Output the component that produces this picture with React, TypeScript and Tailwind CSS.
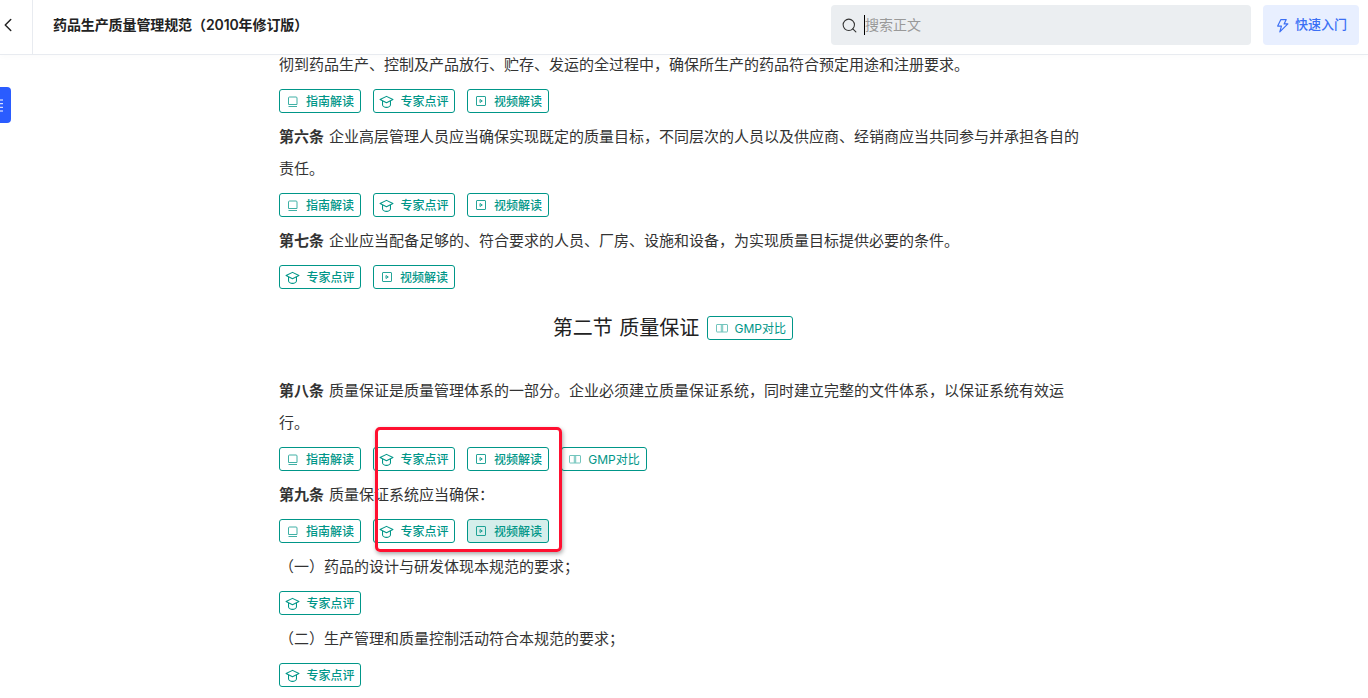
import { ChevronLeft, Search } from "lucide-react";
import type { ReactNode } from "react";

type TagKind = "guide" | "expert" | "video" | "gmp";

function BookIcon() {
  return (
    <svg width="14" height="14" viewBox="0 0 14 14" fill="none" stroke="currentColor" strokeWidth="1" className="opacity-75">
      <path d="M2.500 10.500V4a1 1 0 0 1 1-1h6.500a1 1 0 0 1 1 1v6.500z" />
      <path d="M2.500 12.500h8.500" />
    </svg>
  );
}

function CapIcon() {
  return (
    <svg width="15" height="15" viewBox="0 0 14 14" fill="none" stroke="currentColor" strokeWidth="1" strokeLinejoin="round">
      <path d="M7 2.200 13 5.200 7 8.200 1 5.200z" />
      <path d="M3.300 6.600V10c0 1.400 2 2.500 3.700 2.500s3.700-1.100 3.700-2.500V6.600" />
    </svg>
  );
}

function VideoIcon() {
  return (
    <svg width="14" height="14" viewBox="0 0 14 14" fill="none" stroke="currentColor" strokeWidth="1" className="opacity-85">
      <rect x="2.500" y="2.500" width="9" height="9" rx="0.500" />
      <path d="M6 5.500v3L8.300 7z" />
    </svg>
  );
}

function CompareIcon() {
  return (
    <svg width="14" height="14" viewBox="0 0 14 14" fill="none" stroke="currentColor" strokeWidth="1" className="opacity-55">
      <rect x="1.500" y="3.500" width="11" height="7.500" rx="0.500" />
      <path d="M6.300 3.500V11M7.700 3.500V11" />
    </svg>
  );
}

const TAGS: Record<TagKind, { label: string; icon: ReactNode; width: string }> = {
  guide: { label: "指南解读", icon: <BookIcon />, width: "w-[82px]" },
  expert: { label: "专家点评", icon: <CapIcon />, width: "w-[82px]" },
  video: { label: "视频解读", icon: <VideoIcon />, width: "w-[82px]" },
  gmp: { label: "GMP对比", icon: <CompareIcon />, width: "w-[86px]" },
};

function Tag({ kind, active }: { kind: TagKind; active?: boolean }) {
  const tag = TAGS[kind];
  return (
    <span
      className={`flex h-6 items-center justify-center gap-[6px] rounded-[3px] border border-[#009688] text-xs font-medium text-[#009688] ${tag.width} ${
        active ? "bg-[#d5eeeb]" : "bg-white"
      }`}
    >
      {tag.icon}
      <span className={kind === "gmp" ? "pt-px font-normal" : "pt-px"}>{tag.label}</span>
    </span>
  );
}

function TagRow({ kinds, activeIndex }: { kinds: TagKind[]; activeIndex?: number }) {
  return (
    <div className="mt-2 mb-2 flex gap-3">
      {kinds.map((kind, i) => (
        <Tag key={kind} kind={kind} active={i === activeIndex} />
      ))}
    </div>
  );
}

function Para({ title, children }: { title?: string; children: ReactNode }) {
  return (
    <p className="text-[15px] leading-8 text-[#333]">
      {title && <strong className="mr-[5px] font-semibold">{title}</strong>}
      {children}
    </p>
  );
}

export default function App() {
  return (
    <div
      className="relative flex h-[698px] w-[1368px] flex-col overflow-hidden bg-white"
      style={{ fontFamily: 'Inter, "Noto Sans CJK SC", sans-serif' }}
    >
      <header className="relative z-10 flex h-[55px] shrink-0 items-center border-b border-[#e8ebf0] bg-white shadow-[0_2px_6px_rgba(0,0,0,0.02)]">
        <div className="flex h-full w-[33px] items-center border-r border-[#e8ebf0] pb-1">
          <ChevronLeft size={22} strokeWidth={1.6} className="-ml-[3px] text-[#222]" />
        </div>
        <h1 className="mb-1 ml-5 flex-1 text-sm font-semibold tracking-[-0.1px] text-[#222]">药品生产质量管理规范（2010年修订版）</h1>
        <div className="mb-1 flex h-10 w-[420px] items-center rounded bg-[#ebeef1] pl-[10px]">
          <Search size={17} strokeWidth={1.5} className="text-[#333]" />
          <span className="ml-[6px] h-5 w-px bg-black" />
          <span className="text-sm text-[#999]">搜索正文</span>
        </div>
        <div className="mr-[9px] mb-1 ml-3 flex h-10 w-24 items-center justify-center gap-[5px] rounded bg-[#e8efff] text-[13px] font-medium text-[#3b6ff5]">
          <svg width="15" height="15" viewBox="0 0 14 14" fill="none" stroke="currentColor" strokeWidth="1.100" strokeLinejoin="round">
            <path d="M5.500 1.500h5L8.500 5.500h3.500L4.500 13 6 7.500H2.500z" />
          </svg>
          快速入门
        </div>
      </header>

      <main className="flex-1 overflow-hidden pl-[279px]">
        <div className="-mt-[7px] w-[805px] pt-px">
          <Para>彻到药品生产、控制及产品放行、贮存、发运的全过程中，确保所生产的药品符合预定用途和注册要求。</Para>
          <TagRow kinds={["guide", "expert", "video"]} />
          <Para title="第六条">企业高层管理人员应当确保实现既定的质量目标，不同层次的人员以及供应商、经销商应当共同参与并承担各自的责任。</Para>
          <TagRow kinds={["guide", "expert", "video"]} />
          <Para title="第七条">企业应当配备足够的、符合要求的人员、厂房、设施和设备，为实现质量目标提供必要的条件。</Para>
          <TagRow kinds={["expert", "video"]} />
          <div className="mt-6 mb-8 flex h-[30px] items-center justify-center gap-2 pr-[17px]">
            <h2 className="text-xl text-[#222] [word-spacing:1px]">第二节 质量保证</h2>
            <Tag kind="gmp" />
          </div>
          <Para title="第八条">质量保证是质量管理体系的一部分。企业必须建立质量保证系统，同时建立完整的文件体系，以保证系统有效运行。</Para>
          <TagRow kinds={["guide", "expert", "video", "gmp"]} />
          <Para title="第九条">质量保证系统应当确保：</Para>
          <TagRow kinds={["guide", "expert", "video"]} activeIndex={2} />
          <Para>（一）药品的设计与研发体现本规范的要求；</Para>
          <TagRow kinds={["expert"]} />
          <Para>（二）生产管理和质量控制活动符合本规范的要求；</Para>
          <TagRow kinds={["expert"]} />
        </div>
      </main>

      {/* side tab that opens the outline */}
      <div className="absolute top-[87px] left-0 flex h-9 w-[11px] items-center rounded-r bg-[#2a5cff]">
        <svg width="4" height="13" viewBox="0 0 4 13" stroke="white" strokeWidth="1" fill="none">
          <path d="M0 1h3M0 4.700h3M0 8.300h3M0 12h3" />
        </svg>
      </div>

      {/* red annotation drawn on the screenshot */}
      <div className="absolute top-[427px] left-[375px] h-[125px] w-[187px] rounded-[5px] border-[3px] border-[#ff1030] shadow-[1px_2px_4px_rgba(0,0,0,0.35)]" />
    </div>
  );
}
